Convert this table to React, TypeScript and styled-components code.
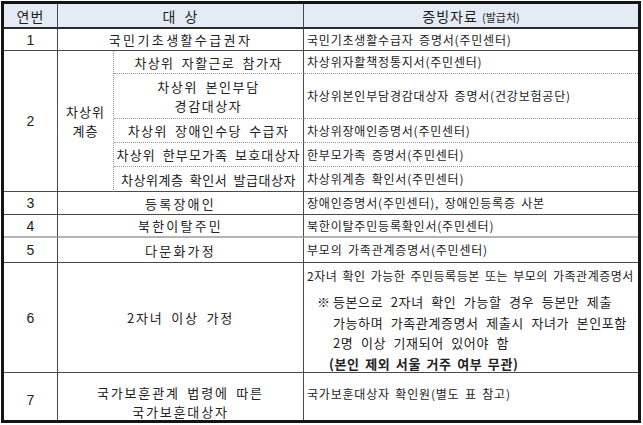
import React from 'react';
import styled, { createGlobalStyle } from 'styled-components';

const Global = createGlobalStyle`
  html, body { margin: 0; padding: 0; background: #fff; }
  body { font-family: "Noto Sans CJK KR", "Noto Sans", sans-serif; }
`;

const Page = styled.div`
  padding: 1px 0 0 1px;
`;

type Line = 'solid' | 'dotted' | 'gray' | 'head' | 'none';
const lineCss = (l: Line) => {
  switch (l) {
    case 'solid':
      return '1px solid #4a4a4a';
    case 'dotted':
      return '1px dotted #9a9a9a';
    case 'gray':
      return '2px solid #b4b4b4';
    case 'head':
      return '2px solid #2a2a2a';
    default:
      return 'none';
  }
};

const Grid = styled.div`
  display: grid;
  width: 640px;
  box-sizing: border-box;
  border: 3px solid #151515;
  grid-template-columns: 54px 56px 190px 334px;
  grid-template-rows: 25px 22px 23px 45px 24px 24px 25px 23px 23px 25px 110px 47px;
  color: #222;
`;

type CellProps = {
  $bottom?: Line;
  $right?: Line;
  $rows?: number;
  $cols?: number;
  $pt?: number;
  $pb?: number;
};

const Cell = styled.div<CellProps>`
  box-sizing: border-box;
  display: flex;
  flex-direction: column;
  justify-content: center;
  align-items: center;
  text-align: center;
  border-bottom: ${(p) => lineCss(p.$bottom ?? 'solid')};
  border-right: ${(p) => lineCss(p.$right ?? 'solid')};
  grid-row: ${(p) => (p.$rows ? `span ${p.$rows}` : 'auto')};
  grid-column: ${(p) => (p.$cols ? `span ${p.$cols}` : 'auto')};
  padding-top: ${(p) => p.$pt ?? 0}px;
  padding-bottom: ${(p) => p.$pb ?? 0}px;
  white-space: nowrap;
  overflow: hidden;
`;

const HeadCell = styled(Cell)`
  background: #e5ebf4;
  font-size: 14px;
  letter-spacing: 1px;
  color: #1e1e1e;
`;

const HeadSmall = styled.span`
  font-size: 11px;
  letter-spacing: 0;
`;

const NumCell = styled(Cell)`
  font-family: "Liberation Sans", Arial, sans-serif;
  font-size: 14px;
`;

const LabelCell = styled(Cell)<{ $ls?: number }>`
  font-size: 13px;
  line-height: 19px;
  letter-spacing: ${(p) => p.$ls ?? 1.4}px;
  word-spacing: 3px;
`;

const DocCell = styled(Cell)<{ $top?: boolean }>`
  align-items: flex-start;
  justify-content: ${(p) => (p.$top ? 'flex-start' : 'center')};
  text-align: left;
  padding-left: 3px;
  font-size: 12px;
  letter-spacing: 0.8px;
  word-spacing: 2px;
  line-height: 20px;
`;

const DocLine = styled.div`
  letter-spacing: 0.5px;
`;

const Note = styled.div`
  display: flex;
  margin-top: 6px;
  padding-left: 10px;
  font-size: 13px;
  letter-spacing: 0.6px;
  word-spacing: 4px;
  line-height: 20.5px;
`;

const Mark = styled.span`
  width: 16px;
  flex: none;
`;

const NoteBody = styled.div`
  display: flex;
  flex-direction: column;
`;

const Strong = styled.div`
  font-weight: 700;
  margin-left: -4px;
  word-spacing: 2px;
`;

export default function App() {
  return (
    <Page>
      <Global />
      <Grid>
        <HeadCell $bottom="head">연번</HeadCell>
        <HeadCell $bottom="head" $cols={2}>
          대&nbsp;&nbsp;상
        </HeadCell>
        <HeadCell $bottom="head" $right="none">
          <span>
            증빙자료 <HeadSmall>(발급처)</HeadSmall>
          </span>
        </HeadCell>

        <NumCell>1</NumCell>
        <LabelCell $cols={2} $ls={2.4}>
          국민기초생활수급권자
        </LabelCell>
        <DocCell $right="none">국민기초생활수급자 증명서(주민센터)</DocCell>

        <NumCell $rows={5}>2</NumCell>
        <LabelCell $rows={5} $right="dotted" $ls={1}>
          <div>차상위</div>
          <div>계층</div>
        </LabelCell>
        <LabelCell $bottom="dotted">차상위 자활근로 참가자</LabelCell>
        <DocCell $bottom="dotted" $right="none">
          차상위자활책정통지서(주민센터)
        </DocCell>
        <LabelCell $bottom="dotted" $ls={1.6}>
          <div>차상위 본인부담</div>
          <div>경감대상자</div>
        </LabelCell>
        <DocCell $bottom="dotted" $right="none">
          차상위본인부담경감대상자 증명서(건강보험공단)
        </DocCell>
        <LabelCell $bottom="dotted">차상위 장애인수당 수급자</LabelCell>
        <DocCell $bottom="dotted" $right="none">
          차상위장애인증명서(주민센터)
        </DocCell>
        <LabelCell $bottom="dotted" $ls={1.1}>
          차상위 한부모가족 보호대상자
        </LabelCell>
        <DocCell $bottom="dotted" $right="none">
          한부모가족 증명서(주민센터)
        </DocCell>
        <LabelCell $ls={0.5}>차상위계층 확인서 발급대상자</LabelCell>
        <DocCell $right="none">차상위계층 확인서(주민센터)</DocCell>

        <NumCell>3</NumCell>
        <LabelCell $cols={2} $ls={2.2}>
          등록장애인
        </LabelCell>
        <DocCell $right="none">장애인증명서(주민센터), 장애인등록증 사본</DocCell>

        <NumCell $bottom="gray">4</NumCell>
        <LabelCell $cols={2} $bottom="gray" $ls={2.2}>
          북한이탈주민
        </LabelCell>
        <DocCell $bottom="gray" $right="none">
          북한이탈주민등록확인서(주민센터)
        </DocCell>

        <NumCell>5</NumCell>
        <LabelCell $cols={2} $ls={2.2}>
          다문화가정
        </LabelCell>
        <DocCell $right="none">부모의 가족관계증명서(주민센터)</DocCell>

        <NumCell>6</NumCell>
        <LabelCell $cols={2} $ls={1.8}>
          2자녀 이상 가정
        </LabelCell>
        <DocCell $right="none" $top $pt={3}>
          <DocLine>2자녀 확인 가능한 주민등록등본 또는 부모의 가족관계증명서</DocLine>
          <Note>
            <Mark>※</Mark>
            <NoteBody>
              <div>등본으로 2자녀 확인 가능할 경우 등본만 제출</div>
              <div>가능하며 가족관계증명서 제출시 자녀가 본인포함</div>
              <div>2명 이상 기재되어 있어야 함</div>
              <Strong>(본인 제외 서울 거주 여부 무관)</Strong>
            </NoteBody>
          </Note>
        </DocCell>

        <NumCell $bottom="none" $pt={6}>
          7
        </NumCell>
        <LabelCell $cols={2} $bottom="none" $pt={10} $ls={1.8}>
          <div>국가보훈관계 법령에 따른</div>
          <div>국가보훈대상자</div>
        </LabelCell>
        <DocCell $bottom="none" $right="none" $pb={6}>
          국가보훈대상자 확인원(별도 표 참고)
        </DocCell>
      </Grid>
    </Page>
  );
}
